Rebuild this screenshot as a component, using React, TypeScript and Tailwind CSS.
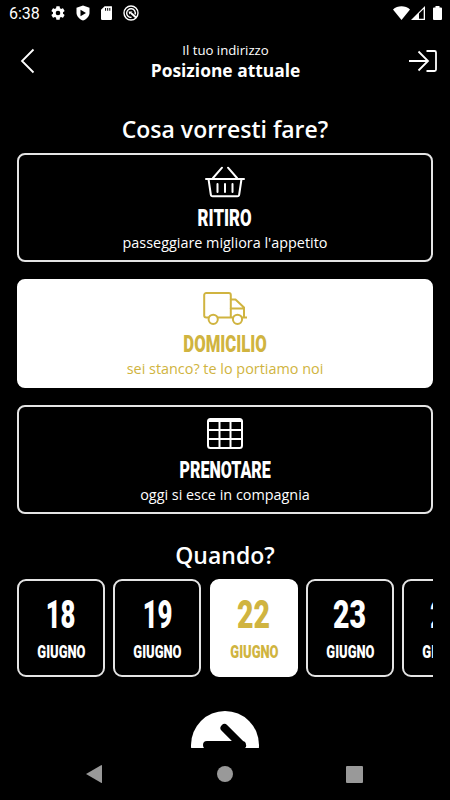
import React, { useState } from 'react';

interface OrderOption {
  id: string;
  title: string;
  subtitle: string;
  titleClass: string;
  iconClass: string;
  icon: React.ReactNode;
}

const BasketIcon = () => (
  <svg width="40" height="32" viewBox="0 0 40 32" fill="none" stroke="currentColor" strokeWidth="2" strokeLinecap="round" strokeLinejoin="round">
    <path d="M1 13h38" />
    <path d="M3.5 13l2.3 15.5a2 2 0 0 0 2 1.8h24.4a2 2 0 0 0 2-1.8L36.5 13" />
    <path d="M8 12L17 1.7M32 12L23 1.7" />
    <path d="M12.5 18v8M20 18v8M27.5 18v8" />
  </svg>
);

const TruckIcon = () => (
  <svg width="44" height="34" viewBox="0 0 44 34" fill="none" stroke="currentColor" strokeWidth="2" strokeLinecap="round" strokeLinejoin="round">
    <path d="M5.5 26.5H3.2a2 2 0 0 1-2-2V4a2 2 0 0 1 2-2h22.6a2 2 0 0 1 2 2v22.5M14.8 26.5h14.7" />
    <path d="M27.8 8.5h4.7l8.5 8v10M27.8 17.5H41M39.5 26.5h4" />
    <circle cx="10.2" cy="28.3" r="4.6" />
    <circle cx="34.5" cy="28.3" r="4.6" />
  </svg>
);

const TableIcon = () => (
  <svg width="36" height="31" viewBox="0 0 36 31" fill="none" stroke="currentColor" strokeWidth="2">
    <rect x="1" y="1" width="34" height="29" rx="2.5" />
    <path d="M1 3h34M1 12h34M1 21h34M12.5 3v27M23.5 3v27" />
  </svg>
);

const options: OrderOption[] = [
  { id: 'ritiro', title: 'RITIRO', subtitle: "passeggiare migliora l'appetito", titleClass: 'scale-x-[0.7]', iconClass: 'pb-[6px]', icon: <BasketIcon /> },
  { id: 'domicilio', title: 'DOMICILIO', subtitle: 'sei stanco? te lo portiamo noi', titleClass: 'scale-x-[0.695]', iconClass: 'pb-[5px]', icon: <TruckIcon /> },
  { id: 'prenotare', title: 'PRENOTARE', subtitle: 'oggi si esce in compagnia', titleClass: 'scale-x-[0.67]', iconClass: 'pb-[7px]', icon: <TableIcon /> },
];

const days = [
  { number: '18', numberClass: 'scale-x-[0.66]' },
  { number: '19', numberClass: 'scale-x-[0.66]' },
  { number: '22', numberClass: 'scale-x-[0.73]' },
  { number: '23', numberClass: 'scale-x-[0.73]' },
  { number: '24', numberClass: 'scale-x-[0.73]' },
];

const StatusBar = () => (
  <div className="flex h-[26px] shrink-0 items-center justify-between pl-[9px] pr-[8px]">
    <div className="flex items-center">
      <span className="w-[42px] pt-px font-[Roboto] text-[16px] leading-none">6:38</span>
      <svg width="14" height="14" viewBox="2 2 20 20" fill="currentColor">
        <path d="M19.140 12.940c.04-.3.060-.61.060-.94 0-.32-.02-.64-.07-.94l2.030-1.580a.49.49 0 0 0 .12-.61l-1.920-3.320a.49.49 0 0 0-.59-.22l-2.390.96a7 7 0 0 0-1.620-.94l-.36-2.540a.48.48 0 0 0-.48-.41h-3.840a.47.47 0 0 0-.47.41l-.36 2.540c-.59.24-1.130.57-1.620.94l-2.390-.96a.48.48 0 0 0-.59.22L2.740 8.870a.47.47 0 0 0 .12.61l2.030 1.580a6 6 0 0 0-.02 1.880l-2.030 1.580a.49.49 0 0 0-.12.61l1.920 3.320c.12.22.37.29.59.22l2.390-.96c.5.38 1.030.7 1.620.94l.36 2.540c.05.24.24.41.48.41h3.840c.24 0 .44-.17.47-.41l.36-2.540c.59-.24 1.130-.56 1.620-.94l2.390.96c.22.08.47 0 .59-.22l1.920-3.320a.47.47 0 0 0-.12-.61zM12 15.300a3.300 3.300 0 1 1 0-6.600 3.300 3.300 0 0 1 0 6.600z" />
      </svg>
      <svg className="ml-[11px]" width="14" height="16" viewBox="0 0 14 16">
        <path d="M7 .5l6.5 2.300v5C13.500 11 11 14.200 7 15.500 3 14.200.5 11 .5 7.800v-5z" fill="currentColor" />
        <path d="M4.500 4.800v6.400l5.500-3.200z" fill="black" />
      </svg>
      <svg className="ml-[11px]" width="11" height="14" viewBox="0 0 12 15">
        <path d="M4 0h6.500A1.300 1.300 0 0 1 12 1.300v12.400a1.300 1.300 0 0 1-1.300 1.300H1.300A1.300 1.300 0 0 1 0 13.700V4z" fill="currentColor" />
        <path d="M5 2v3M7.300 2v3M9.600 2v3" stroke="black" strokeWidth="1.1" />
      </svg>
      <svg className="ml-[11px]" width="16" height="16" viewBox="0 0 16 16" fill="none" stroke="currentColor">
        <circle cx="8" cy="8" r="7" strokeWidth="1.4" />
        <path d="M12 9.500A4.300 4.300 0 1 0 8.500 12.300" strokeWidth="1.4" />
        <path d="M8 8l5 4.500" strokeWidth="1.9" />
        <path d="M5.500 6.500h4l-3 3z" fill="currentColor" stroke="none" />
      </svg>
    </div>
    <div className="flex items-center">
      <svg width="17" height="14" viewBox="0 0 17 14" fill="currentColor">
        <path d="M0 3.500C4.500-.7 12.500-.7 17 3.500L8.500 14z" />
      </svg>
      <svg className="ml-px" width="14" height="14" viewBox="0 0 14 14">
        <path d="M0 14L14 0v14z" fill="currentColor" />
        <path d="M8 7.500L12.700 3v9.700H8z" fill="black" />
      </svg>
      <svg className="ml-[8px]" width="9" height="14" viewBox="0 0 9 14" fill="currentColor">
        <path d="M2.500 0h4v1.500H8a1 1 0 0 1 1 1V13a1 1 0 0 1-1 1H1a1 1 0 0 1-1-1V2.500a1 1 0 0 1 1-1h1.500z" />
      </svg>
    </div>
  </div>
);

const Header = () => (
  <header className="flex h-[70px] shrink-0 items-center justify-between pl-[20px] pr-[13px]">
    <button aria-label="Indietro">
      <svg width="15" height="26" viewBox="0 0 15 26" fill="none" stroke="currentColor" strokeWidth="1.8">
        <path d="M13.500 1.500L2 13l11.500 11.500" />
      </svg>
    </button>
    <div className="flex flex-col items-center pl-[7px]">
      <span className="text-[13.2px] leading-[20px]">Il tuo indirizzo</span>
      <span className="pb-[2px] text-[17.4px] font-bold leading-[20px]">Posizione attuale</span>
    </div>
    <button aria-label="Accedi">
      <svg width="28" height="22" viewBox="0 0 28 22" fill="none" stroke="currentColor" strokeWidth="1.8">
        <path d="M0 11h19M9.500 1.500L19 11l-9.500 9.500M17.500 1h8a1.500 1.500 0 0 1 1.500 1.500v17a1.500 1.500 0 0 1-1.500 1.500h-8" />
      </svg>
    </button>
  </header>
);

const NavigationBar = () => (
  <nav className="flex h-[52px] shrink-0 items-center justify-between pl-[86px] pr-[87px] text-[#999999]">
    <svg width="17" height="18" viewBox="0 0 17 18" fill="currentColor">
      <path d="M0 9L15.500 0q.5 0 .5.500v17q0 .5-.5.500z" />
    </svg>
    <div className="h-4 w-4 rounded-full bg-[#999999]" />
    <div className="h-[17px] w-[17px] rounded-[1px] bg-[#999999]" />
  </nav>
);

const App: React.FC = () => {
  const [selectedOption, setSelectedOption] = useState('domicilio');
  const [selectedDay, setSelectedDay] = useState('22');

  return (
    <div className="flex h-[800px] w-[450px] flex-col overflow-hidden bg-black font-['Open_Sans',sans-serif] text-white">
      <StatusBar />
      <Header />

      <main className="flex min-h-0 flex-1 flex-col overflow-hidden px-[17px] pt-[14px]">
        <h2 className="h-[43px] text-center text-[23px] font-semibold leading-[38px]">Cosa vorresti fare?</h2>

        <div className="flex flex-col gap-[17px]">
          {options.map((option) => (
            <button
              key={option.id}
              onClick={() => setSelectedOption(option.id)}
              className={`flex h-[109px] flex-col items-center rounded-[8px] border-2 ${
                option.id === selectedOption ? 'border-white bg-white text-[#d0b440]' : 'border-[#e4e4e4] bg-black'
              }`}
            >
              <span className={`flex h-[49px] items-end ${option.iconClass}`}>{option.icon}</span>
              <span className={`font-[Roboto] text-[24px] font-black leading-[29px] ${option.titleClass}`}>{option.title}</span>
              <span className="text-[14.4px] leading-[20px]">{option.subtitle}</span>
            </button>
          ))}
        </div>

        <h2 className="h-[65px] shrink-0 pt-[22px] text-center text-[23px] font-semibold leading-[38px]">Quando?</h2>

        <div className="flex shrink-0 gap-[8.3px] overflow-hidden">
          {days.map((day) => (
            <button
              key={day.number}
              onClick={() => setSelectedDay(day.number)}
              className={`flex h-[98px] w-[88px] shrink-0 flex-col items-center rounded-[9px] border-2 ${
                day.number === selectedDay ? 'border-white bg-white text-[#d0b440]' : 'border-[#e4e4e4] bg-black'
              }`}
            >
              <span className={`mt-[10px] font-[Roboto] text-[39px] font-black leading-[48px] ${day.numberClass}`}>{day.number}</span>
              <span className="scale-x-[0.74] pl-px font-[Roboto] text-[17.5px] font-black leading-[26px]">GIUGNO</span>
            </button>
          ))}
        </div>

        <div className="mt-[34px] flex h-[37px] shrink-0 items-start justify-center overflow-hidden">
          <svg className="shrink-0" width="68" height="68" viewBox="0 0 68 68">
            <circle cx="34" cy="34" r="34" fill="white" />
            <path d="M16 34h35M33.500 17L51 34.500L33.500 52" fill="none" stroke="black" strokeWidth="8" strokeLinecap="round" strokeLinejoin="round" />
          </svg>
        </div>
      </main>

      <NavigationBar />
    </div>
  );
};

export default App;
